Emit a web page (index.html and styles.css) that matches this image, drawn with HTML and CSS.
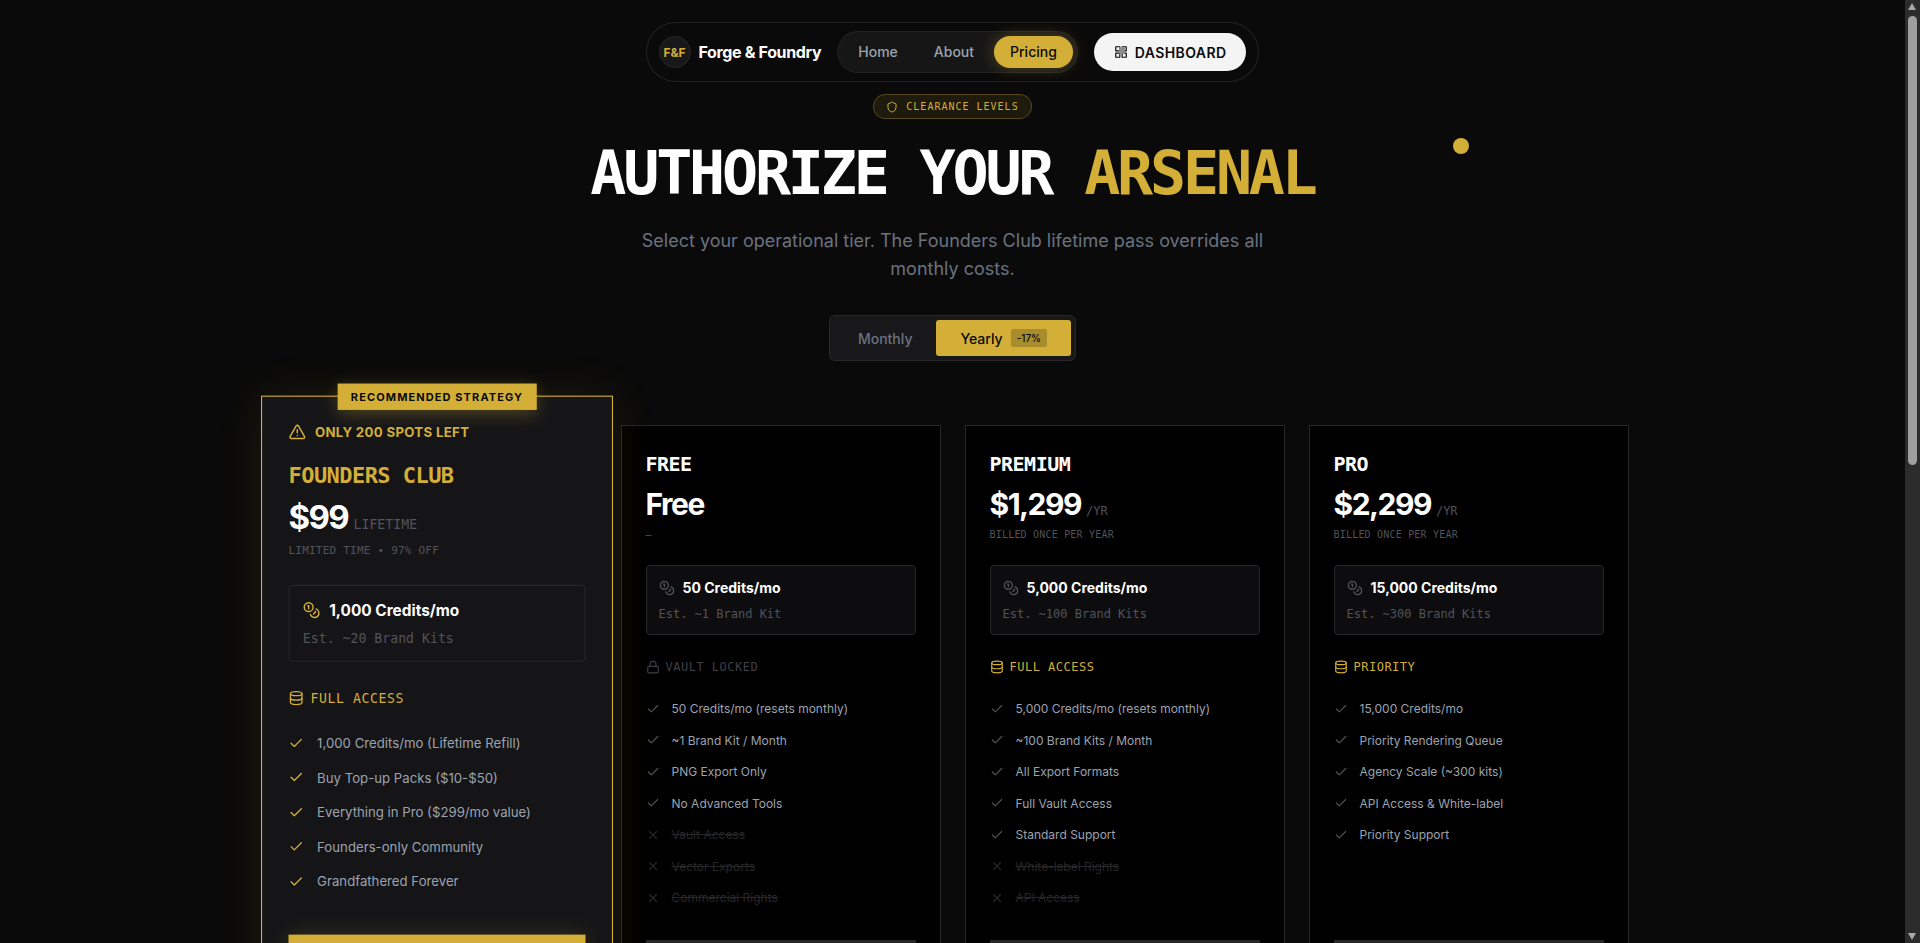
FILE: index.html
```html
<!DOCTYPE html>
<html lang="en">
<head>
<meta charset="utf-8">
<title>Forge &amp; Foundry — Pricing</title>
<link rel="stylesheet" href="styles.css">
</head>
<body>
<svg class="defs" width="0" height="0" aria-hidden="true">
  <defs>
    <symbol id="i-check" viewBox="0 0 24 24"><path d="M20 6 9 17l-5-5"/></symbol>
    <symbol id="i-x" viewBox="0 0 24 24"><path d="M18 6 6 18"/><path d="m6 6 12 12"/></symbol>
    <symbol id="i-coins" viewBox="0 0 24 24"><circle cx="8" cy="8" r="6"/><path d="M18.09 10.37A6 6 0 1 1 10.34 18"/><path d="M7 6h1v4"/><path d="m16.71 13.88.7.71-2.82 2.82"/></symbol>
    <symbol id="i-db" viewBox="0 0 24 24"><ellipse cx="12" cy="5" rx="9" ry="3"/><path d="M3 5v14a9 3 0 0 0 18 0V5"/><path d="M3 12a9 3 0 0 0 18 0"/></symbol>
    <symbol id="i-lock" viewBox="0 0 24 24"><rect x="3" y="11" width="18" height="11" rx="2"/><path d="M7 11V7a5 5 0 0 1 10 0v4"/></symbol>
    <symbol id="i-warn" viewBox="0 0 24 24"><path d="m21.73 18-8-14a2 2 0 0 0-3.48 0l-8 14A2 2 0 0 0 4 21h16a2 2 0 0 0 1.73-3"/><path d="M12 9v4"/><path d="M12 17h.01"/></symbol>
    <symbol id="i-shield" viewBox="0 0 24 24"><path d="M20 13c0 5-3.500 7.500-7.660 8.950a1 1 0 0 1-.67-.01C7.500 20.500 4 18 4 13V6a1 1 0 0 1 1-1c2 0 4.500-1.200 6.240-2.720a1.170 1.170 0 0 1 1.520 0C14.510 3.810 17 5 19 5a1 1 0 0 1 1 1z"/></symbol>
    <symbol id="i-grid" viewBox="0 0 24 24"><rect x="3" y="3" width="7" height="7"/><rect x="14" y="3" width="7" height="7"/><rect x="14" y="14" width="7" height="7"/><rect x="3" y="14" width="7" height="7"/></symbol>
  </defs>
</svg>

<div class="page">
  <div class="nav-row">
    <nav class="nav">
      <a class="brand">
        <span class="logo">F&amp;F</span>
        <span class="brand-name">Forge &amp; Foundry</span>
      </a>
      <div class="links">
        <a class="link">Home</a>
        <a class="link">About</a>
        <a class="link link-active">Pricing</a>
      </div>
      <a class="dash">
        <span class="dash-icon"><svg class="ic ic-14"><use href="#i-grid"/></svg><i class="dash-blob"></i></span>
        DASHBOARD
      </a>
    </nav>
  </div>

  <header class="hero">
    <div class="badge"><svg class="ic ic-12"><use href="#i-shield"/></svg>CLEARANCE LEVELS</div>
    <h1 class="title">AUTHORIZE YOUR <span class="gold">ARSENAL</span></h1>
    <p class="lead">Select your operational tier. The Founders Club lifetime pass overrides all monthly costs.</p>
    <div class="toggle">
      <button class="tab">Monthly</button>
      <button class="tab tab-on">Yearly <span class="save">-17%</span></button>
    </div>
    <span class="dot"></span>
  </header>

  <main class="grid">
    <article class="card card-founder">
      <div class="ribbon">RECOMMENDED STRATEGY</div>
      <div class="warn"><svg class="ic ic-16"><use href="#i-warn"/></svg>ONLY 200 SPOTS LEFT</div>
      <h2 class="name gold">FOUNDERS CLUB</h2>
      <div class="price"><span class="amount">$99</span><span class="per">LIFETIME</span></div>
      <div class="note">LIMITED TIME • 97% OFF</div>
      <div class="credits">
        <div class="credits-top"><svg class="ic ic-16 gold"><use href="#i-coins"/></svg>1,000 Credits/mo</div>
        <div class="credits-est">Est. ~20 Brand Kits</div>
      </div>
      <div class="access gold"><svg class="ic ic-14"><use href="#i-db"/></svg>FULL ACCESS</div>
      <ul class="features">
        <li class="yes"><svg class="ic ic-14"><use href="#i-check"/></svg>1,000 Credits/mo (Lifetime Refill)</li>
        <li class="yes"><svg class="ic ic-14"><use href="#i-check"/></svg>Buy Top-up Packs ($10-$50)</li>
        <li class="yes"><svg class="ic ic-14"><use href="#i-check"/></svg>Everything in Pro ($299/mo value)</li>
        <li class="yes"><svg class="ic ic-14"><use href="#i-check"/></svg>Founders-only Community</li>
        <li class="yes"><svg class="ic ic-14"><use href="#i-check"/></svg>Grandfathered Forever</li>
      </ul>
      <a class="cta cta-gold">CLAIM YOUR SPOT</a>
    </article>

    <article class="card">
      <h2 class="name">FREE</h2>
      <div class="price"><span class="amount">Free</span></div>
      <div class="note">—</div>
      <div class="credits">
        <div class="credits-top"><svg class="ic ic-16"><use href="#i-coins"/></svg>50 Credits/mo</div>
        <div class="credits-est">Est. ~1 Brand Kit</div>
      </div>
      <div class="access access-off"><svg class="ic ic-14"><use href="#i-lock"/></svg>VAULT LOCKED</div>
      <ul class="features">
        <li class="yes"><svg class="ic ic-14"><use href="#i-check"/></svg>50 Credits/mo (resets monthly)</li>
        <li class="yes"><svg class="ic ic-14"><use href="#i-check"/></svg>~1 Brand Kit / Month</li>
        <li class="yes"><svg class="ic ic-14"><use href="#i-check"/></svg>PNG Export Only</li>
        <li class="yes"><svg class="ic ic-14"><use href="#i-check"/></svg>No Advanced Tools</li>
        <li class="no"><svg class="ic ic-14"><use href="#i-x"/></svg><span>Vault Access</span></li>
        <li class="no"><svg class="ic ic-14"><use href="#i-x"/></svg><span>Vector Exports</span></li>
        <li class="no"><svg class="ic ic-14"><use href="#i-x"/></svg><span>Commercial Rights</span></li>
      </ul>
      <a class="cta">GET STARTED</a>
    </article>

    <article class="card">
      <h2 class="name">PREMIUM</h2>
      <div class="price"><span class="amount">$1,299</span><span class="per">/YR</span></div>
      <div class="note">BILLED ONCE PER YEAR</div>
      <div class="credits">
        <div class="credits-top"><svg class="ic ic-16"><use href="#i-coins"/></svg>5,000 Credits/mo</div>
        <div class="credits-est">Est. ~100 Brand Kits</div>
      </div>
      <div class="access gold"><svg class="ic ic-14"><use href="#i-db"/></svg>FULL ACCESS</div>
      <ul class="features">
        <li class="yes"><svg class="ic ic-14"><use href="#i-check"/></svg>5,000 Credits/mo (resets monthly)</li>
        <li class="yes"><svg class="ic ic-14"><use href="#i-check"/></svg>~100 Brand Kits / Month</li>
        <li class="yes"><svg class="ic ic-14"><use href="#i-check"/></svg>All Export Formats</li>
        <li class="yes"><svg class="ic ic-14"><use href="#i-check"/></svg>Full Vault Access</li>
        <li class="yes"><svg class="ic ic-14"><use href="#i-check"/></svg>Standard Support</li>
        <li class="no"><svg class="ic ic-14"><use href="#i-x"/></svg><span>White-label Rights</span></li>
        <li class="no"><svg class="ic ic-14"><use href="#i-x"/></svg><span>API Access</span></li>
      </ul>
      <a class="cta">SELECT PLAN</a>
    </article>

    <article class="card">
      <h2 class="name">PRO</h2>
      <div class="price"><span class="amount">$2,299</span><span class="per">/YR</span></div>
      <div class="note">BILLED ONCE PER YEAR</div>
      <div class="credits">
        <div class="credits-top"><svg class="ic ic-16"><use href="#i-coins"/></svg>15,000 Credits/mo</div>
        <div class="credits-est">Est. ~300 Brand Kits</div>
      </div>
      <div class="access gold"><svg class="ic ic-14"><use href="#i-db"/></svg>PRIORITY</div>
      <ul class="features">
        <li class="yes"><svg class="ic ic-14"><use href="#i-check"/></svg>15,000 Credits/mo</li>
        <li class="yes"><svg class="ic ic-14"><use href="#i-check"/></svg>Priority Rendering Queue</li>
        <li class="yes"><svg class="ic ic-14"><use href="#i-check"/></svg>Agency Scale (~300 kits)</li>
        <li class="yes"><svg class="ic ic-14"><use href="#i-check"/></svg>API Access &amp; White-label</li>
        <li class="yes"><svg class="ic ic-14"><use href="#i-check"/></svg>Priority Support</li>
      </ul>
      <a class="cta">SELECT PLAN</a>
    </article>
  </main>
</div>

<div class="scrollbar" aria-hidden="true">
  <i class="sb-arrow sb-up"></i>
  <i class="sb-thumb"></i>
  <i class="sb-arrow sb-down"></i>
</div>
</body>
</html>
```

FILE: styles.css
```css
* { box-sizing: border-box; margin: 0; padding: 0; }

html { background: #0a0a0a; }

body {
  background: #0a0a0a;
  color: #fff;
  font-family: "Inter", "Liberation Sans", sans-serif;
  padding-right: 15px;
}

.defs { position: absolute; }

/* Drawn scrollbar, over the page's right edge */
.scrollbar {
  position: fixed;
  top: 0;
  right: 0;
  bottom: 0;
  width: 15px;
  background: #2c2c2c;
  z-index: 10;
}
.sb-thumb {
  position: absolute;
  top: 16px;
  left: 3px;
  width: 9px;
  height: 449px;
  background: #9f9f9f;
  border-radius: 5px;
}
.sb-arrow {
  position: absolute;
  left: 3px;
  width: 0;
  height: 0;
  border-left: 4.5px solid transparent;
  border-right: 4.5px solid transparent;
}
.sb-up { top: 3px; border-bottom: 7px solid #a8a8a8; }
.sb-down { bottom: 3px; border-top: 7px solid #a8a8a8; }

.page {
  min-height: 1900px;
  display: flex;
  flex-direction: column;
  align-items: center;
}

.gold { color: #d4af37; }

.ic {
  flex: none;
  fill: none;
  stroke: currentColor;
  stroke-width: 2;
  stroke-linecap: round;
  stroke-linejoin: round;
}
.ic-12 { width: 12px; height: 12px; }
.ic-14 { width: 14px; height: 14px; }
.ic-16 { width: 16px; height: 16px; }

/* Nav */
.nav-row {
  padding-top: 22px;
  display: flex;
  justify-content: center;
}
.nav {
  height: 60px;
  display: flex;
  align-items: center;
  gap: 16px;
  padding: 0 12px;
  background: #0a0a0a;
  border: 1px solid rgba(255, 255, 255, 0.1);
  border-radius: 30px;
}
.brand { display: flex; align-items: center; gap: 8px; }
.logo {
  width: 32px;
  height: 32px;
  display: flex;
  align-items: center;
  justify-content: center;
  background: #18181b;
  border: 1px solid #27272a;
  border-radius: 50%;
  color: #d4af37;
  font-size: 12px;
  font-weight: 700;
}
.brand-name {
  font-size: 16px;
  font-weight: 700;
  letter-spacing: -0.35px;
}
.links {
  display: flex;
  gap: 4px;
  padding: 4px;
  background: rgba(255, 255, 255, 0.05);
  border: 1px solid rgba(255, 255, 255, 0.05);
  border-radius: 21px;
  height: 42px;
  align-items: center;
}
.link {
  height: 32px;
  line-height: 32px;
  padding: 0 16px;
  border-radius: 16px;
  color: #9ca3af;
  font-size: 14px;
  font-weight: 500;
}
.link-active {
  background: #d4af37;
  color: #0a0a0a;
  box-shadow: 0 0 15px rgba(212, 175, 55, 0.3);
}
.dash {
  height: 38px;
  display: flex;
  align-items: center;
  gap: 7px;
  padding: 0 20px;
  background: #f4f4f5;
  border-radius: 19px;
  color: #0a0a0a;
  font-size: 14px;
  font-weight: 600;
  letter-spacing: 0.4px;
}
.dash-icon { position: relative; display: block; width: 14px; height: 14px; }
.dash-icon .ic { display: block; }
.dash-blob {
  position: absolute;
  left: 5px;
  top: 2px;
  width: 6px;
  height: 7px;
  background: #8c8c8c;
  border-radius: 1px;
}

/* Hero */
.hero {
  position: relative;
  width: 100%;
  display: flex;
  flex-direction: column;
  align-items: center;
  padding-top: 12px;
}
.badge {
  display: flex;
  align-items: center;
  gap: 8px;
  padding: 4px 12px;
  background: rgba(212, 175, 55, 0.1);
  border: 1px solid rgba(212, 175, 55, 0.3);
  border-radius: 13px;
  color: #d4af37;
  font-family: "DejaVu Sans Mono", "Liberation Mono", monospace;
  font-size: 10px;
  line-height: 15px;
  letter-spacing: 1px;
}
.title {
  margin-top: 24px;
  font-family: "DejaVu Sans Mono", "Liberation Mono", monospace;
  font-size: 60px;
  line-height: 60px;
  font-weight: 700;
  letter-spacing: -3.2px;
}
.lead {
  margin-top: 24px;
  width: 672px;
  text-align: center;
  color: #6b7280;
  font-size: 18px;
  line-height: 28px;
}
.toggle {
  margin-top: 32px;
  display: flex;
  align-items: center;
  padding: 4px;
  background: #18181b;
  border: 1px solid #27272a;
  border-radius: 6px;
}
.tab {
  height: 36px;
  padding: 0 24px;
  display: flex;
  align-items: center;
  gap: 8px;
  border: 0;
  border-radius: 3px;
  background: transparent;
  color: #6b7280;
  font: 500 14px "Inter", "Liberation Sans", sans-serif;
}
.tab-on { background: #d4af37; color: #0a0a0a; }
.save {
  padding: 2px 6px;
  background: rgba(0, 0, 0, 0.2);
  border-radius: 2px;
  font-size: 10px;
  line-height: 14px;
}
.dot {
  position: absolute;
  left: 1453px;
  top: 56px;
  width: 16px;
  height: 16px;
  border-radius: 50%;
  background: #d4af37;
}

/* Cards */
.grid {
  margin-top: 64px;
  width: 1352px;
  display: grid;
  grid-template-columns: repeat(4, 320px);
  gap: 24px;
  align-items: stretch;
}
.card {
  position: relative;
  display: flex;
  flex-direction: column;
  padding: 24px;
  background: #000;
  border: 1px solid #27272a;
}
.card-founder {
  background: #151518;
  border-color: #d4af37;
  box-shadow: 0 0 40px rgba(212, 175, 55, 0.1);
  transform: scale(1.1);
  z-index: 2;
}
.ribbon {
  position: absolute;
  top: -12px;
  left: 50%;
  transform: translateX(-50%);
  height: 24px;
  padding: 0 12px;
  display: flex;
  align-items: center;
  white-space: nowrap;
  background: #d4af37;
  color: #0a0a0a;
  font-size: 10px;
  font-weight: 700;
  letter-spacing: 1px;
  box-shadow: 0 4px 15px rgba(212, 175, 55, 0.3);
}
.warn {
  display: flex;
  align-items: center;
  gap: 8px;
  height: 16px;
  margin-bottom: 17px;
  color: #d4af37;
  font-size: 12px;
  font-weight: 700;
  letter-spacing: 0.3px;
}
.name {
  font-family: "DejaVu Sans Mono", "Liberation Mono", monospace;
  font-size: 20px;
  line-height: 28px;
  font-weight: 700;
  letter-spacing: -0.5px;
}
.price {
  margin-top: 8px;
  display: flex;
  align-items: baseline;
  gap: 5px;
}
.amount {
  font-size: 30px;
  line-height: 36px;
  font-weight: 700;
  letter-spacing: -1.5px;
}
.per {
  color: #52525b;
  font-family: "DejaVu Sans Mono", "Liberation Mono", monospace;
  font-size: 12px;
}
.note {
  margin-top: 5px;
  height: 15px;
  color: #52525b;
  font-family: "DejaVu Sans Mono", "Liberation Mono", monospace;
  font-size: 10px;
  line-height: 15px;
  letter-spacing: 0.2px;
}
.card-founder .price { margin-top: 6px; }
.credits {
  margin-top: 23px;
  padding: 12px;
  background: #0d0d0f;
  border: 1px solid #27272a;
  border-radius: 4px;
}
.card-founder .credits { margin-top: 24px; background: #151518; }
.credits-top {
  display: flex;
  align-items: center;
  gap: 8px;
  font-size: 14px;
  line-height: 20px;
  font-weight: 700;
}
.credits-top .ic { color: #52525b; }
.credits-top .gold { color: #d4af37; }
.credits-est {
  margin-top: 8px;
  color: #52525b;
  font-family: "DejaVu Sans Mono", "Liberation Mono", monospace;
  font-size: 12px;
  line-height: 16px;
}
.access {
  margin-top: 24px;
  display: flex;
  align-items: center;
  gap: 6px;
  font-family: "DejaVu Sans Mono", "Liberation Mono", monospace;
  font-size: 12px;
  line-height: 16px;
  letter-spacing: 0.5px;
}
.card-founder .access { margin-top: 25px; }
.access-off { color: #3f3f46; }
.features {
  list-style: none;
  margin-top: 24px;
  display: flex;
  flex-direction: column;
  gap: 12px;
}
.card-founder .features { margin-top: 23px; }
.features li {
  display: flex;
  align-items: center;
  gap: 12px;
  font-size: 12px;
  line-height: 19.5px;
  color: #9ca3af;
}
.features .yes .ic { color: #52525b; }
.card-founder .features .yes .ic { color: #d4af37; }
.features .no { color: #27272a; }
.features .no .ic { color: #27272a; }
.features .no span { text-decoration: line-through; }
.cta {
  margin-top: auto;
  height: 48px;
  display: flex;
  align-items: center;
  justify-content: center;
  background: #27272a;
  color: #71717a;
  font-family: "DejaVu Sans Mono", "Liberation Mono", monospace;
  font-size: 12px;
  font-weight: 700;
  letter-spacing: 1px;
}
.features + .cta { margin-top: 32px; }
.card:nth-child(4) .features + .cta { margin-top: auto; }
.card-founder .features + .cta { margin-top: auto; margin-bottom: 25px; }
.cta-gold {
  background: #d4af37;
  color: #0a0a0a;
  box-shadow: 0 0 20px rgba(212, 175, 55, 0.2);
}
```
